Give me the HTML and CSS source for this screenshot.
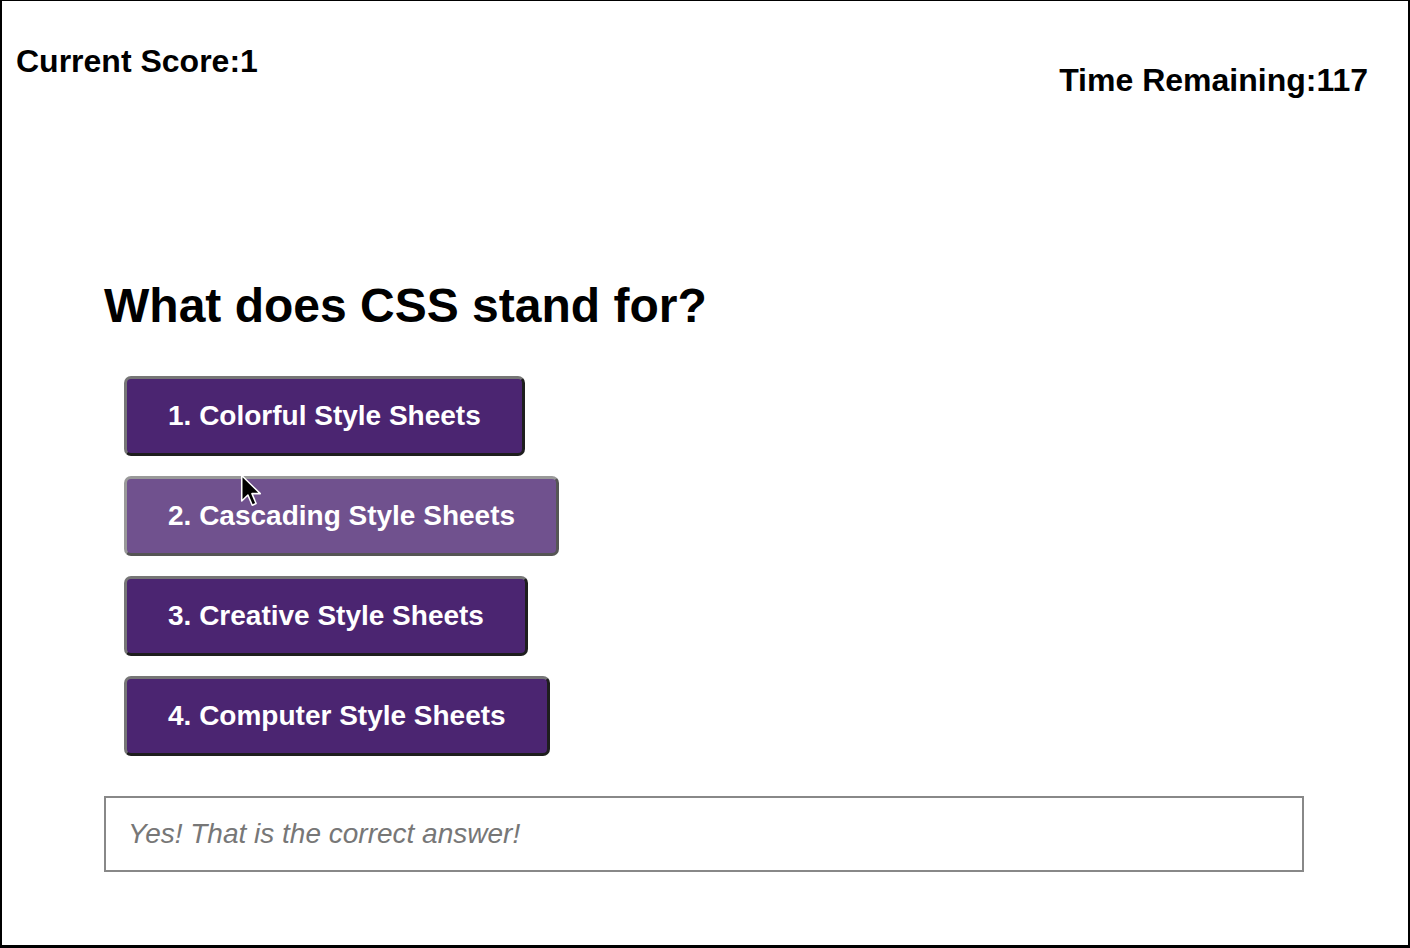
FILE: index.html
```html
<!DOCTYPE html>
<html lang="en">
<head>
<meta charset="utf-8">
<title>CSS Quiz</title>
<link rel="stylesheet" href="styles.css">
</head>
<body>
<div class="frame">
  <header class="topbar">
    <div class="score">Current Score:1</div>
    <div class="timer">Time Remaining:117</div>
  </header>
  <main class="quiz">
    <h1 class="question">What does CSS stand for?</h1>
    <div class="answers">
      <button class="answer">1. Colorful Style Sheets</button>
      <button class="answer is-hover">2. Cascading Style Sheets
        <svg class="cursor" width="22" height="34" viewBox="0 0 14 22" aria-hidden="true"><path d="M1 1 L1 17.5 L5 13.6 L7.8 20.2 L10.3 19.1 L7.6 12.7 L13 12.7 Z" fill="#000" stroke="#fff" stroke-width="1" stroke-linejoin="round"/></svg>
      </button>
      <button class="answer">3. Creative Style Sheets</button>
      <button class="answer">4. Computer Style Sheets</button>
    </div>
    <div class="feedback">Yes! That is the correct answer!</div>
  </main>
</div>
</body>
</html>
```
FILE: styles.css
```css
html, body {
  margin: 0;
  padding: 0;
  background: #fff;
}

body {
  font-family: "Liberation Sans", Arial, sans-serif;
  color: #000;
}

.frame {
  box-sizing: border-box;
  width: 1410px;
  height: 948px;
  border: 2px solid #000;
  border-top-width: 1px;
  border-bottom-width: 3px;
  overflow: hidden;
}

.topbar {
  display: flex;
  justify-content: space-between;
  align-items: flex-start;
  padding: 0 40px 0 14px;
}

.score,
.timer {
  font-size: 32px;
  font-weight: bold;
  line-height: 36px;
}

.score {
  margin-top: 42px;
}

.timer {
  margin-top: 61px;
}

.quiz {
  margin-left: 102px;
}

.question {
  margin: 181px 0 0;
  font-size: 48px;
  line-height: 54px;
  font-weight: bold;
}

.answers {
  display: flex;
  flex-direction: column;
  align-items: flex-start;
  gap: 20px;
  margin: 43px 0 0 20px;
}

.answer {
  position: relative;
  box-sizing: border-box;
  height: 80px;
  padding: 0 41px;
  font-family: "Liberation Sans", Arial, sans-serif;
  font-size: 28px;
  font-weight: bold;
  line-height: 32px;
  color: #fff;
  background: #4b2571;
  border: 3px solid;
  border-color: #767676 #1e1e1e #1e1e1e #767676;
  border-radius: 7px;
  cursor: pointer;
}

.answer.is-hover {
  background: #70518e;
  border-color: #999 #555 #555 #999;
}

.cursor {
  position: absolute;
  left: 113px;
  top: -5px;
}

.feedback {
  box-sizing: border-box;
  width: 1200px;
  margin-top: 40px;
  padding: 20px 22px;
  border: 2px solid #888;
  font-size: 28px;
  font-style: italic;
  line-height: 32px;
  color: #777;
}
```
